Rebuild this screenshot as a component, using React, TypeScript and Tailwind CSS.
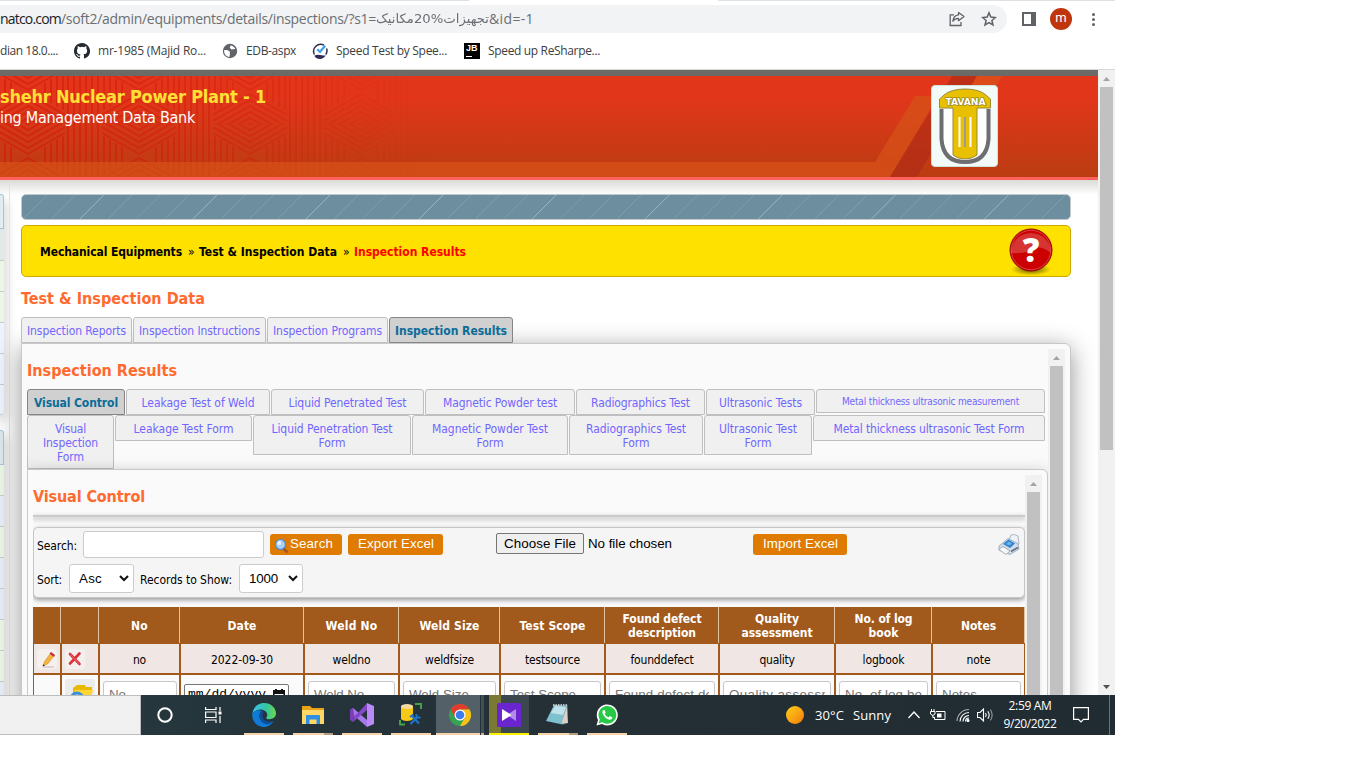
import React, { useLayoutEffect, useRef, useState } from "react";

const ui = "font-['DejaVu_Sans_Condensed','DejaVu_Sans',sans-serif] [font-stretch:condensed]";
const segoe = "font-['Open_Sans','Noto_Sans',sans-serif] [font-stretch:normal]";
const arial = "font-['Liberation_Sans',sans-serif] [font-stretch:normal]";

/* One line of text tracked so that it fills the width `w`. */
function Fit({ w, children, className = "", scale = false }: { w: number; children: string; className?: string; scale?: boolean }) {
  const ref = useRef<HTMLSpanElement>(null);
  const [v, setV] = useState<number | null>(null);
  useLayoutEffect(() => {
    if (ref.current && v === null) {
      const n = ref.current.getBoundingClientRect().width;
      setV(scale ? w / n : (w - n) / children.length);
    }
  }, [v, w, scale, children]);
  const style = v === null ? {} : scale ? { transform: `scaleX(${v})` } : { letterSpacing: `${v}px` };
  return (
    <span className={`block shrink-0 whitespace-pre ${className}`} style={{ width: w }}>
      <span ref={ref} className="inline-block origin-left" style={style}>{children}</span>
    </span>
  );
}

function Arrow({ down = false }: { down?: boolean }) {
  return (
    <svg width="17" height="17" viewBox="0 0 17 17" className="block shrink-0">
      <path d={down ? "M5 7h7l-3.5 4z" : "M5 11h7l-3.5-4z"} fill={down ? "#505050" : "#a3a3a3"} />
    </svg>
  );
}

function ScrollBar({ thumb }: { thumb: string }) {
  return (
    <div className="flex w-[17px] shrink-0 flex-col items-center self-stretch bg-[#f1f1f1]">
      <Arrow />
      <div className={`w-[13px] bg-[#c1c1c1] ${thumb}`} />
    </div>
  );
}

function Toolbar() {
  return (
    <div className={`flex h-[33px] flex-col bg-white ${segoe}`}>
      <div className="flex h-px justify-between">
        <div className="w-[469px] bg-[#dee1e6]" />
        <div className="w-[397px] bg-[#dee1e6]" />
      </div>
      <div className="mt-1 flex h-7 items-center">
        <div className="flex h-7 w-[1007px] items-center rounded-r-full bg-[#f1f3f4] text-[14px] leading-5 text-[#6b6f73]">
          <Fit w={61} className="text-[#202124]">natco.com</Fit>
          <Fit w={315}>/soft2/admin/equipments/details/inspections/?s1=</Fit>
          <Fit w={113} scale className="font-['DejaVu_Sans',sans-serif] text-[13px]">تجهیزات%20مکانیک</Fit>
          <Fit w={45}>&id=-1</Fit>
          <svg className="ml-[415px]" width="16" height="16" viewBox="0 0 16 16" fill="none" stroke="#5f6368" strokeWidth="1.3">
            <path d="M5 3.8H1.2V14.5H12V11" />
            <path d="M9.5 1.5L15 5.5L9.5 9.7V7.3C6.8 7.3 5 8.3 3.8 10.2C4.2 6.5 6 4.2 9.5 3.8Z" strokeLinejoin="round" />
          </svg>
          <svg className="ml-4" width="16" height="16" viewBox="0 0 16 16" fill="none" stroke="#5f6368" strokeWidth="1.5">
            <path d="M8 1.8L9.8 6.1L14.4 6.5L10.9 9.5L12 14L8 11.6L4 14L5.1 9.5L1.6 6.5L6.2 6.1Z" />
          </svg>
        </div>
        <div className="ml-[15px] h-[14px] w-[14px] border-2 border-r-[5px] border-[#5f6368]" />
        <div className="ml-[14px] flex h-[22px] w-[22px] items-center justify-center rounded-full bg-[#bf360c] pb-0.5 font-['Roboto',sans-serif] text-[13px] text-white">m</div>
        <div className="ml-5 flex flex-col gap-[2px]">
          <i className="h-[3px] w-[3px] rounded-full bg-[#5f6368]" />
          <i className="h-[3px] w-[3px] rounded-full bg-[#5f6368]" />
          <i className="h-[3px] w-[3px] rounded-full bg-[#5f6368]" />
        </div>
      </div>
    </div>
  );
}

function Bookmarks() {
  return (
    <div className={`flex h-[37px] items-center border-b border-[#d8d8d8] bg-white text-[12px] leading-4 text-[#3c4043] ${segoe}`}>
      <Fit w={58}>dian 18.0....</Fit>
      <svg className="ml-4 shrink-0" width="16" height="16" viewBox="0 0 16 16" fill="#24292f">
        <path d="M8 0C3.58 0 0 3.58 0 8c0 3.54 2.29 6.53 5.47 7.59.4.07.55-.17.55-.38v-1.49c-2.01.37-2.53-.49-2.69-.94-.09-.23-.48-.94-.82-1.13-.28-.15-.68-.52-.01-.53.63-.01 1.08.58 1.23.82.72 1.21 1.87.87 2.33.66.07-.52.28-.87.51-1.07-1.78-.2-3.64-.89-3.64-3.95 0-.87.31-1.59.82-2.15-.08-.2-.36-1.02.08-2.12 0 0 .67-.21 2.2.82a7.6 7.6 0 0 1 4 0c1.53-1.04 2.2-.82 2.2-.82.44 1.1.16 1.92.08 2.12.51.56.82 1.27.82 2.15 0 3.07-1.87 3.75-3.65 3.95.29.25.54.73.54 1.48v2.2c0 .21.15.46.55.38A8 8 0 0 0 8 0Z" />
      </svg>
      <Fit w={108} className="ml-2">mr-1985 (Majid Ro...</Fit>
      <svg className="ml-4 shrink-0" width="16" height="16" viewBox="0 0 16 16">
        <circle cx="8" cy="8" r="7.2" fill="#5f6368" />
        <path d="M2 7.4C3.5 6.6 6 7.2 7.4 8.2C8.6 9.2 7.4 10 7.9 11.2L7.4 13.900C4.200 13.600 2 11 2 7.400ZM8.500 2.400C7.600 3.200 8.800 4 7.700 4.800L9.500 6.400L13.300 6C12.700 4 10.700 2.600 8.500 2.400Z" fill="#fff" />
      </svg>
      <Fit w={50} className="ml-2">EDB-aspx</Fit>
      <svg className="ml-4 shrink-0" width="16" height="16" viewBox="0 0 16 16" fill="none">
        <path d="M2.400 11.500A7 7 0 0 1 12 2.200M14.600 5.500A7 7 0 0 1 13.800 11.500" stroke="#2b2d52" strokeWidth="1.500" />
        <path d="M2.300 12.800Q5 11.300 8 12Q11 12.700 13.700 12.200Q11.500 16 8 16Q4.300 16 2.300 12.800" fill="#2b2d52" />
        <path d="M5.200 6.200L8 8.800L13.200 2.800" stroke="#3ea1f2" strokeWidth="2.200" />
      </svg>
      <Fit w={111} className="ml-2">Speed Test by Spee...</Fit>
      <div className={`ml-[17px] flex h-4 w-4 shrink-0 flex-col bg-black pl-[2px] pt-[1px] text-[9px] font-bold leading-[9px] text-white ${arial}`}>
        <span>JB</span>
        <i className="mt-[3px] h-px w-[6px] bg-white" />
      </div>
      <Fit w={112} className="ml-2">Speed up ReSharpe...</Fit>
    </div>
  );
}

function HeaderArt() {
  const offsets = [-24, -18, -12, -6, 0, 6, 12, 18, 24, 30, 36, 42, 48, 54, 60];
  return (
    <svg width="1098" height="101" viewBox="0 0 1098 101" className="col-start-1 row-start-1 block">
      <defs>
        <linearGradient id="hd" x1="0" y1="0" x2="0" y2="1">
          <stop offset="0.2" stopColor="#e2361b" />
          <stop offset="0.85" stopColor="#c23b13" />
          <stop offset="1" stopColor="#bb3c11" />
        </linearGradient>
        <linearGradient id="fade" x1="0" x2="1" y1="0" y2="0">
          <stop offset="0" stopColor="#fff" />
          <stop offset="0.5" stopColor="#fff" stopOpacity="0.7" />
          <stop offset="1" stopColor="#fff" stopOpacity="0" />
        </linearGradient>
        <mask id="mk">
          <rect width="430" height="86" fill="url(#fade)" />
          <rect y="86" width="430" height="15" fill="url(#fade)" opacity="0.25" />
        </mask>
        <clipPath id="roof"><path d="M37 0L74 21V32H0V21Z" /></clipPath>
        <clipPath id="vee"><path d="M37 64L74 43V32H0V43Z" /></clipPath>
        <pattern id="hatch" width="111" height="64" patternUnits="userSpaceOnUse" x="-9" y="15">
          <g stroke="#d80d04" strokeWidth="2" fill="none">
            <g clipPath="url(#roof)">{offsets.map((y) => <path key={y} d={`M0 ${y + 24}L37 ${y + 3}L74 ${y + 24}`} />)}</g>
            <g clipPath="url(#vee)">{offsets.map((y) => <path key={y} d={`M0 ${y}L37 ${y + 21}L74 ${y}`} />)}</g>
            {[77, 83, 89, 95, 101, 107].map((x) => <path key={x} d={`M${x} 0V64`} />)}
            {[2, 8, 14, 20].map((d) => (
              <path key={d} d={`M${d} 0V${20 - d * 0.57}M${74 - d} 0V${20 - d * 0.57}M${d} 64V${44 + d * 0.57}M${74 - d} 64V${44 + d * 0.57}`} />
            ))}
          </g>
        </pattern>
      </defs>
      <rect width="1098" height="101" fill="url(#hd)" />
      <path d="M0 86H875L915 20H938L890 101H0Z" fill="#d65018" opacity="0.8" />
      <path d="M890 101L952 0H977L917 101Z" fill="#b12e17" opacity="0.75" />
      <path d="M977 0H1002L990 20H965Z" fill="#dc4b19" />
      <rect width="430" height="101" fill="url(#hatch)" mask="url(#mk)" opacity="0.45" />
    </svg>
  );
}

function Logo() {
  return (
    <svg width="67" height="82" viewBox="0 0 67 82" className="block">
      <rect x="0.500" y="0.500" width="66" height="81" rx="3.500" fill="#f2fbf8" stroke="#cfe3dd" />
      <path d="M10.500 24V54Q12 77 34 77Q56 77 57.500 54V24" fill="#fff" stroke="#6e6e72" strokeWidth="4" />
      <path d="M8.500 23V14Q11 12 13 10Q20 4 34 4Q48 4 55 10Q57 12 59.500 14V23H46V70Q41 74 34 74Q27 74 22 70V23Z" fill="#e8c000" stroke="#9a8a3a" strokeWidth="1" />
      <path d="M28.500 32V62M39.500 32V62" stroke="#fff" strokeWidth="2" />
      <path d="M34 32V62" stroke="#9b9b9b" strokeWidth="2" />
      <text x="14.500" y="20.300" fontFamily="DejaVu Sans" fontWeight="bold" fontSize="8.500" textLength="40" lengthAdjust="spacingAndGlyphs" fill="#fff" stroke="#8b7a2a" strokeWidth="1.200" paintOrder="stroke">TAVANA</text>
    </svg>
  );
}

function SideRows() {
  return (
    <div className="flex w-[9px] shrink-0 flex-col pt-[14px]">
      <div className="w-1 rounded-r-[3px] shadow-[0_6px_12px_rgba(0,0,0,0.4)]">
        <div className="h-[35px] rounded-tr-[3px] border border-l-0 border-[#a9c5d3] bg-[#dfecf2]" />
        <div className="h-8 border-b border-[#c3ced3] bg-[#dfe9e6]" />
        <div className="h-[31px] border-b border-[#c3ced3] bg-[#eaf7e4]" />
        <div className="h-[31px] border-b border-[#c3ced3] bg-[#eaf7e4]" />
        <div className="h-[31px] border-b border-[#c3ced3] bg-[#edf3fc]" />
        <div className="h-[31px] border-b border-[#c3ced3] bg-[#edf3fc]" />
        <div className="h-[30px] rounded-br-[3px] border-b border-[#c3ced3] bg-[#edf3fc]" />
      </div>
      <div className="mt-[15px] w-1 rounded-r-[3px] shadow-[0_6px_12px_rgba(0,0,0,0.4)]">
        <div className="h-[35px] rounded-tr-[3px] border border-l-0 border-[#a9c5d3] bg-[#dbe9ef]" />
        <div className="h-[31px] border-b border-[#c3ced3] bg-[#eaf7e4]" />
        <div className="h-[31px] border-b border-[#c3ced3] bg-[#e6eef7]" />
        <div className="h-[31px] border-b border-[#c3ced3] bg-[#eaf7e4]" />
        <div className="h-[31px] border-b border-[#c3ced3] bg-[#e6eef7]" />
        <div className="h-[31px] border-b border-[#c3ced3] bg-[#e6eef7]" />
        <div className="h-[31px] border-b border-[#c3ced3] bg-[#eaf7e4]" />
        <div className="h-[31px] border-b border-[#c3ced3] bg-[#eaf7e4]" />
        <div className="h-[31px] border-b border-[#c3ced3] bg-[#e6eef7]" />
      </div>
    </div>
  );
}

function HelpIcon() {
  return (
    <svg width="46" height="50" viewBox="0 0 46 50" className={`block ${segoe}`}>
      <defs>
        <radialGradient id="sh"><stop offset="0.3" stopColor="#6d5c00" stopOpacity="0.75" /><stop offset="1" stopColor="#6d5c00" stopOpacity="0" /></radialGradient>
      </defs>
      <ellipse cx="23" cy="42.500" rx="20" ry="6" fill="url(#sh)" />
      <circle cx="23" cy="23" r="21" fill="#cc0000" stroke="#8f1010" />
      <path d="M3 26Q20 27 28 21Q33 19 43 26A20 20 0 1 0 3 26Z" fill="#fff" opacity="0.200" />
      <circle cx="23" cy="23" r="19.700" fill="none" stroke="#ee6060" opacity="0.600" />
      <text x="23" y="35" textAnchor="middle" fontFamily="Open Sans" fontWeight="800" fontSize="33" fill="#fff">?</text>
    </svg>
  );
}

function Tab({ box, lines, active = false, small = false }: { box: string; lines: [string, number][]; active?: boolean; small?: boolean }) {
  return (
    <div className={`flex shrink-0 flex-col items-center rounded-t-[3px] border ${box} ${active ? "border-[#858585] bg-[#d0d0d0] font-bold text-[#0b6c99]" : "border-[#bfbfbf] bg-[#f0f0f0] text-[#7066ff]"} ${small ? "pt-[5px] text-[10px] leading-[13px]" : "pt-[6px] text-[12px] leading-[14px]"}`}>
      {lines.map(([t, w]) => <Fit key={t} w={w}>{t}</Fit>)}
    </div>
  );
}

function Chevron() {
  return <svg width="10" height="7" viewBox="0 0 10 7" fill="none" stroke="#111" strokeWidth="2"><path d="M1 1L5 5L9 1" /></svg>;
}

function SearchBox() {
  return (
    <div className="h-[71px] rounded-[5px] border border-[#c6c6c6] bg-[#f5f5f5] pl-[3px] text-[12px] leading-4 text-black shadow-[0_2px_5px_rgba(0,0,0,0.4)]">
      <div className="flex h-[33px] items-start pt-[3px]">
        <Fit w={40} className="mt-[7px]">Search:</Fit>
        <div className="ml-[6px] h-[27px] w-[181px] rounded-[3px] border border-[#ccc] bg-white" />
        <div className={`ml-[6px] mt-[3px] flex h-[21px] w-[72px] rounded-[3px] bg-[#de7b00] pl-1 text-[13.33px] leading-[19px] text-white ${arial}`}>
          <svg width="16" height="16" viewBox="0 0 16 16" className="mt-1">
            <path d="M9 10L13.500 14.500" stroke="#a3581c" strokeWidth="2.500" />
            <circle cx="6.500" cy="6.500" r="5" fill="#a9d0f8" stroke="#4d88cc" strokeWidth="1.200" />
            <circle cx="5.200" cy="5" r="2" fill="#e8f4ff" />
          </svg>
          <Fit w={43}>Search</Fit>
        </div>
        <div className={`ml-[6px] mt-[3px] h-[21px] w-[95px] rounded-[3px] bg-[#de7b00] pl-[10px] text-[13.33px] leading-[19px] text-white ${arial}`}><Fit w={76}>Export Excel</Fit></div>
        <div className={`ml-[53px] mt-[2px] h-[21px] w-[88px] rounded-[2px] border border-[#767676] bg-[#efefef] pl-[7px] text-[13.33px] leading-[19px] ${arial}`}><Fit w={72}>Choose File</Fit></div>
        <Fit w={84} className={`ml-1 mt-[5px] text-[13.33px] ${arial}`}>No file chosen</Fit>
        <div className={`ml-[81px] mt-[3px] h-[21px] w-[94px] rounded-[3px] bg-[#de7b00] pl-[10px] text-[13.33px] leading-[19px] text-white ${arial}`}><Fit w={75}>Import Excel</Fit></div>
        <svg width="22" height="22" viewBox="0 0 22 22" className="ml-[151px] mt-[3px]">
          <path d="M11 6L13 1Q16 -0.500 20 2L21 10L18 13Z" fill="#eef2f6" stroke="#aab6c2" />
          <path d="M1 12L10 4.500L20 9.500L21 15L12 20.500L1 16Z" fill="#d3dde9" stroke="#93a1b3" strokeWidth="0.800" />
          <path d="M5 10L10.500 5.500L17 9.500L12 14Z" fill="#2f83cf" />
          <path d="M8 10L11 7.500L14 9.500L11.500 11.500Z" fill="#6fb4ea" />
          <path d="M0.800 15.500L5 12.500L12 17L8 20.500Z" fill="#f7fafc" stroke="#8f9cad" strokeWidth="0.800" />
          <path d="M13 17.500L20 13.500" stroke="#5b6a80" strokeWidth="1.500" />
        </svg>
      </div>
      <div className="flex items-start pt-[3px]">
        <Fit w={25} className="mt-[8px]">Sort:</Fit>
        <div className={`ml-[7px] flex h-[29px] w-[65px] items-center justify-between rounded-[3px] border border-[#ccc] bg-white pl-[9px] pr-1 text-[13.33px] ${arial}`}><Fit w={23}>Asc</Fit><Chevron /></div>
        <Fit w={92} className="ml-[6px] mt-[8px]">Records to Show:</Fit>
        <div className={`ml-[7px] flex h-[29px] w-[64px] items-center justify-between rounded-[3px] border border-[#ccc] bg-white pl-[9px] pr-1 text-[13.33px] ${arial}`}><Fit w={29}>1000</Fit><Chevron /></div>
      </div>
    </div>
  );
}

const cols = "grid w-[992px] grid-cols-[28px_38px_81px_124px_95px_101px_105px_114px_116px_97px_93px]";

const heads: [string, number][][] = [
  [], [], [["No", 17]], [["Date", 29]], [["Weld No", 52]], [["Weld Size", 60]], [["Test Scope", 66]],
  [["Found defect", 79], ["description", 68]], [["Quality", 44], ["assessment", 71]], [["No. of log", 58], ["book", 30]], [["Notes", 35]],
];
const values: [string, number][] = [["no", 13], ["2022-09-30", 62], ["weldno", 38], ["weldfsize", 49], ["testsource", 55], ["founddefect", 63], ["quality", 35], ["logbook", 42], ["note", 24]];
const holders: [string, number][] = [["Weld No", 50], ["Weld Size", 60], ["Test Scope", 66], ["Found defect de", 98], ["Quality assessm", 104], ["No. of log bo", 77], ["Notes", 35]];

function DataTable() {
  const cell = "flex items-center justify-center border-x border-[#a1591c]";
  const input = "h-[27px] min-w-0 flex-1 rounded-[3px] border border-[#c8c8c8] bg-white px-[5px]";
  return (
    <div className="mt-[9px] text-[12px]">
      <div className={`${cols} h-[37px] bg-[#a1591c] font-bold leading-[14px] text-white`}>
        {heads.map((h, i) => (
          <div key={i} className="flex h-9 flex-col items-center justify-center border-r border-[#e2c39f] pl-px pt-px">
            {h.map(([t, w]) => <Fit key={t} w={w}>{t}</Fit>)}
          </div>
        ))}
      </div>
      <div className={`${cols} h-[31px] border-b-2 border-[#a1591c] bg-[#f0e6e4] text-black`}>
        <div className={cell}>
          <svg width="20" height="20" viewBox="0 0 20 20" className="rounded-[3px] bg-[#f5efee]">
            <path d="M6 18H17" stroke="#cfcaca" strokeWidth="1.500" />
            <path d="M6 17L7.500 12.500L13 5L16.500 7.500L10.500 15Z" fill="#f3b33c" stroke="#c98518" strokeWidth="0.500" />
            <path d="M12.500 4.500L17 8L18 6L14 3Z" fill="#c22b35" />
            <path d="M5.500 17.500L6.300 15.300L8 16.500Z" fill="#333" />
          </svg>
        </div>
        <div className={`${cell} !justify-start pl-[3px]`}>
          <svg width="20" height="20" viewBox="0 0 20 20" className="rounded-[3px] bg-[#f3efee]">
            <path d="M5 5L14.500 15M14.500 4.500L5 14.500" stroke="#df3038" strokeWidth="2.600" strokeLinecap="round" />
            <path d="M5 5L14 14.500" stroke="#f06a6a" strokeWidth="1" />
          </svg>
        </div>
        {values.map(([t, w]) => <div key={t} className={`${cell} pt-0.5`}><Fit w={w}>{t}</Fit></div>)}
      </div>
      <div className={`${cols} h-[46px] bg-[#fafafa] text-[13.33px] leading-[25px] text-[#757575] ${arial} [&>div]:items-start [&>div]:border-x [&>div]:border-[#a1591c]`}>
        <div className="flex" />
        <div className="flex pl-[3px] pt-1">
          <svg width="30" height="30" viewBox="0 0 30 30" className="rounded-[3px] bg-[#ececec]">
            <path d="M8 9L12 6H20L21 8H27V22H8Z" fill="#e9b800" />
            <path d="M10 11H28L25 24H7Z" fill="#ffd633" />
            <circle cx="12" cy="20" r="7.500" fill="#3d8fd8" />
            <circle cx="12" cy="20" r="4.500" fill="#cfe9f7" />
          </svg>
        </div>
        <div className="flex pl-[3px] pr-[2px] pt-[6px]"><div className={input}><Fit w={17}>No</Fit></div></div>
        <div className="flex pl-[3px] pt-[9px]">
          <div className="flex h-[22px] w-[105px] items-center rounded-[2px] border border-[#767676] bg-white pl-[3px] text-black">
            <Fit w={78} className="font-['Liberation_Mono',monospace] text-[13px] leading-[18px]">mm/dd/yyyy</Fit>
            <svg width="12" height="13" viewBox="0 0 12 13" className="ml-[7px]"><path d="M0 1H2V0H4V1H8V0H10V1H12V13H0ZM1.500 5V11.500H10.500V5Z" fill="#111" fillRule="evenodd" /></svg>
          </div>
        </div>
        {holders.map(([t, w]) => (
          <div key={t} className="flex min-w-0 px-[3px] pt-[6px]">
            <div className={input}><div className="overflow-hidden"><Fit w={w}>{t}</Fit></div></div>
          </div>
        ))}
      </div>
    </div>
  );
}

function Main() {
  return (
    <div className="ml-[11px] w-[1050px] shrink-0 pt-[14px]">
      <div className="h-[26px] overflow-hidden rounded-[5px] border border-[#c3c9cb] bg-[#6c8e9f]">
        <svg width="1048" height="24" className="block">
          {Array.from({ length: 40 }, (_, i) => (
            <path key={i} d={`M${i * 28.27 - 27} 24L${i * 28.27 - 3} 0`} stroke="#a5c0cd" strokeWidth="1" opacity={i % 4 === 3 ? 0.8 : 0.35} />
          ))}
        </svg>
      </div>
      <div className="mt-[5px] flex h-[52px] items-center rounded-[5px] border border-[#cfa800] bg-[#ffe100] pl-[18px] text-[12px] font-bold text-black">
        <Fit w={142} className="pt-px">Mechanical Equipments</Fit>
        <Fit w={7} className="ml-[6px] pt-px font-normal">»</Fit>
        <Fit w={138} className="ml-1 pt-px">Test & Inspection Data</Fit>
        <Fit w={7} className="ml-[6px] pt-px font-normal">»</Fit>
        <Fit w={112} className="ml-1 pt-px text-[#ff0000]">Inspection Results</Fit>
        <div className="ml-[542px] mt-[2px]"><HelpIcon /></div>
      </div>
      <Fit w={184} className="mt-[10px] h-[30px] text-[16px] font-bold leading-[23px] text-[#ff6a2e]">Test & Inspection Data</Fit>
      <div className="flex gap-px">
        <Tab box="w-[111px] h-[26px]" lines={[["Inspection Reports", 99]]} />
        <Tab box="w-[133px] h-[26px]" lines={[["Inspection Instructions", 121]]} />
        <Tab box="w-[121px] h-[26px]" lines={[["Inspection Programs", 109]]} />
        <Tab active box="w-[124px] h-[26px]" lines={[["Inspection Results", 112]]} />
      </div>
      <div className="flex h-[400px] rounded-tr-[6px] border border-[#c8c8c8] bg-[#fafafa] pl-[5px] pt-[5px] shadow-[0_5px_24px_rgba(0,0,0,0.42)]">
        <div className="w-[1021px] shrink-0">
          <Fit w={150} className="h-[40px] pt-[10px] text-[16px] font-bold leading-6 text-[#ff6a2e]">Inspection Results</Fit>
          <div className="flex h-[26px] gap-px">
            <Tab active box="w-[98px] h-[26px]" lines={[["Visual Control", 84]]} />
            <Tab box="w-[144px] h-[26px]" lines={[["Leakage Test of Weld", 113]]} />
            <Tab box="w-[153px] h-[26px]" lines={[["Liquid Penetrated Test", 118]]} />
            <Tab box="w-[150px] h-[26px]" lines={[["Magnetic Powder test", 114]]} />
            <Tab box="w-[129px] h-[26px]" lines={[["Radiographics Test", 99]]} />
            <Tab box="w-[109px] h-[26px]" lines={[["Ultrasonic Tests", 83]]} />
            <Tab small box="w-[229px] h-[24px]" lines={[["Metal thickness ultrasonic measurement", 177]]} />
          </div>
          <div className="flex h-[54px] items-start gap-px">
            <Tab box="w-[87px] h-[54px]" lines={[["Visual", 31], ["Inspection", 55], ["Form", 27]]} />
            <Tab box="w-[137px] h-[26px]" lines={[["Leakage Test Form", 100]]} />
            <Tab box="w-[158px] h-[40px]" lines={[["Liquid Penetration Test", 121], ["Form", 27]]} />
            <Tab box="w-[156px] h-[40px]" lines={[["Magnetic Powder Test", 116], ["Form", 27]]} />
            <Tab box="w-[134px] h-[40px]" lines={[["Radiographics Test", 100], ["Form", 27]]} />
            <Tab box="w-[108px] h-[40px]" lines={[["Ultrasonic Test", 78], ["Form", 27]]} />
            <Tab box="w-[232px] h-[26px]" lines={[["Metal thickness ultrasonic Test Form", 191]]} />
          </div>
          <div className="[clip-path:inset(-20px_0_0_0)]">
            <div className="flex h-[270px] rounded-tr-[6px] border border-[#c8c8c8] bg-[#fafafa] pl-[5px] pt-[5px] shadow-[0_2px_15px_rgba(0,0,0,0.2)]">
              <div className="w-[992px] shrink-0 overflow-hidden">
                <Fit w={112} className="h-[40px] pt-[10px] text-[16px] font-bold leading-6 text-[#ff6a2e]">Visual Control</Fit>
                <div className="mb-[10px] h-[2px] bg-[#cbcbcb] shadow-[0_2px_5px_1px_rgba(0,0,0,0.200)]" />
                <SearchBox />
                <DataTable />
              </div>
              <ScrollBar thumb="flex-1" />
            </div>
          </div>
        </div>
        <ScrollBar thumb="flex-1" />
      </div>
    </div>
  );
}

const bar = "h-[2px] w-10 bg-[#f6d3a6]";

function Taskbar() {
  return (
    <div className="flex h-10 bg-gradient-to-r from-[#263940] via-[#242f36] to-[#202c32] text-white">
      <div className="h-10 w-[141px] shrink-0 border border-l-0 border-[#bdbdbd] bg-[#f1f1f1]" />
      <div className="flex w-[103px] shrink-0 items-center">
        <svg className="ml-4" width="16" height="16" viewBox="0 0 16 16"><circle cx="8" cy="8" r="6.700" fill="none" stroke="#fff" strokeWidth="2" /></svg>
        <svg className="ml-8" width="17" height="16" viewBox="0 0 17 16" fill="none" stroke="#fff" strokeWidth="1.200"><path d="M0.600 0V2.500H11V0M0.600 16V13H11V16M0.600 5H11V10.500H0.600ZM15 0V4M15 9V16" /><path d="M13.500 4.500H16.500V7.500H13.500Z" fill="#fff" stroke="none" /></svg>
      </div>
      <div className="flex h-10 w-10 shrink-0 flex-col items-center justify-between pt-2">
        <svg width="24" height="24" viewBox="0 0 24 24">
          <defs><linearGradient id="eg" x1="0" x2="1"><stop stopColor="#35c1f1" /><stop offset="0.600" stopColor="#36c6a0" /><stop offset="1" stopColor="#6bd84a" /></linearGradient></defs>
          <path d="M0.300 11C1 4.500 6 0 12 0C19 0 24 5 24 10.500C24 14 21 16.200 17.500 16.200C14.500 16.200 13.800 15.200 14.500 14.200C17 10.500 13 6.500 8.500 6.500C5 6.500 1.500 8.500 0.300 11Z" fill="url(#eg)" />
          <path d="M0.300 11C2 7.500 6.500 6.300 10 8C7 9.500 6.500 14 9 17.500C11.500 21 17 21.500 21.500 18C19.500 21.800 16 24 12 24C5 24-0.500 18 0.300 11Z" fill="#0f7bd4" />
          <path d="M10 8C6 11 7 18 12 20.500C15.500 22.200 19 20.500 21.500 18C17.500 19.800 11.500 18.500 10.500 14C10 12 10.500 10.500 11.500 9Z" fill="#0c4fa0" />
        </svg>
        <div className={bar} />
      </div>
      <div className="ml-[9px] flex h-10 w-10 shrink-0 flex-col items-center justify-between pt-[10px]">
        <svg width="22" height="20" viewBox="0 0 22 20"><path d="M0 1H8L10 3H22V19H0Z" fill="#e8a317" /><path d="M0 5H22V19H0Z" fill="#ffd766" /><path d="M4 19V11Q4 10 5 10H17Q18 10 18 11V19H14.500V14.500H7.500V19Z" fill="#2f8fe0" /></svg>
        <div className={`${bar} flex justify-end`}><i className="h-[2px] w-[9px] bg-[#b59e80]" /></div>
      </div>
      <div className="ml-[9px] flex h-10 w-10 shrink-0 flex-col items-center justify-between pt-2">
        <svg width="24" height="24" viewBox="0 0 24 24">
          <path d="M17 0L24 3V21L17 24Z" fill="#b98af5" />
          <path d="M0 7L3 5L17 17V24L4 12.500L1.500 17.500L0 16.500Z" fill="#a678ea" />
          <path d="M0 7L3 5L4 11.500V12.500L3 19L0 17Z" fill="#7a3fb5" />
          <path d="M3 19L17 7V0L8.500 9.500L4 13Z" fill="#8448c6" />
        </svg>
        <div className={bar} />
      </div>
      <div className="ml-[9px] flex h-10 w-10 shrink-0 flex-col items-center justify-between pt-2">
        <svg width="24" height="24" viewBox="0 0 24 24"><path d="M2 3V16C4 18.500 12 18.500 14 16V3Z" fill="#f6c915" /><ellipse cx="8" cy="3.500" rx="6" ry="2.500" fill="#f3d9a0" /><path d="M16 1H22V6M1 17V21.500H6" fill="none" stroke="#46a04a" strokeWidth="2" /><path d="M11.500 21L18 14.500M13 13L20 20.500" stroke="#1b74cc" strokeWidth="2.200" /><path d="M11 14L14.500 11.500M17.500 11V14.500H21.500" fill="none" stroke="#1b74cc" strokeWidth="2" /></svg>
        <div className={bar} />
      </div>
      <div className="ml-[5px] flex h-10 w-11 shrink-0 flex-col items-center justify-between bg-[#536067] pt-[9px]">
        <svg width="22" height="22" viewBox="0 0 24 24" className="ml-1"><circle cx="12" cy="12" r="12" fill="#34a352" /><path d="M12 12L1.600 6A12 12 0 0 1 22.400 6H12Z" fill="#e33b2e" /><path d="M1.600 6L6.800 15L12 12Z" fill="#e33b2e" /><path d="M12 6H22.400A12 12 0 0 1 12 24L17.200 15Z" fill="#fbc116" /><circle cx="12" cy="12" r="6" fill="#fff" /><circle cx="12" cy="12" r="4.700" fill="#3b7ded" /></svg>
        <div className="h-[2px] w-11 bg-[#f6d3a6]" />
      </div>
      <div className="ml-px flex h-10 w-[3px] shrink-0 items-end bg-[#434f55]"><i className="h-[2px] w-[3px] bg-[#c9ae8b]" /></div>
      <div className="ml-[5px] flex h-10 w-10 shrink-0 flex-col items-center justify-between bg-[linear-gradient(90deg,#7b7a35_12px,#3b484e_12px)] pt-2">
        <svg width="24" height="24" viewBox="0 0 24 24"><rect width="24" height="24" rx="1.500" fill="#6a25cf" /><path d="M19 6V18L10 12Z" fill="#b58be8" /><path d="M5 6V18L14.500 12Z" fill="#fff" /></svg>
        <div className="h-[2px] w-10 bg-[#fff000]" />
      </div>
      <div className="ml-[9px] flex h-10 w-10 shrink-0 flex-col items-center justify-between pt-2">
        <svg width="24" height="24" viewBox="0 0 24 24"><path d="M8 3L22 2L21 20L17 22L1 18Z" fill="#3d6673" /><path d="M8 2L21 3L15 21L0 18Z" fill="#7fc0cf" /><path d="M9 3L20 4L17 12L5 10Z" fill="#bfe2ea" /><path d="M21 3L22 20L15 21Z" fill="#d8d2c4" /><path d="M7 2H21" stroke="#e8e8e8" strokeWidth="1.500" strokeDasharray="1.500 1" /></svg>
        <div className={`${bar} flex justify-end`}><i className="h-[2px] w-[9px] bg-[#b59e80]" /></div>
      </div>
      <div className="ml-[9px] flex h-10 w-10 shrink-0 flex-col items-center justify-between pt-[9px]">
        <svg width="22" height="22" viewBox="0 0 24 24"><path d="M0.500 23.500L2.200 17.500A11.500 11.500 0 1 1 6.500 21.900Z" fill="#fff" /><path d="M2.900 21.100L4.200 17A9.700 9.700 0 1 1 7 19.900Z" fill="#27c845" /><path d="M8.500 6.500C7 7 6.500 9 7.500 11C9 14 11.500 16.500 14.500 17.200C16.500 17.500 17.800 16.300 17.800 14.500L15 13L13.700 14.600C11.800 13.800 10.300 12.500 9.500 10.500L10.500 9.200L9.400 6.500Z" fill="#fff" /></svg>
        <div className={bar} />
      </div>
      <div className={`flex items-center ${segoe}`}>
        <div className="ml-[159px] h-[18px] w-[18px] shrink-0 rounded-full bg-gradient-to-br from-[#ffd018] to-[#ee7b0c]" />
        <Fit w={29} className="ml-[11px] pt-0.5 text-[13px]">30°C</Fit>
        <Fit w={38} className="ml-[9px] pt-0.5 text-[13px]">Sunny</Fit>
        <svg className="ml-[17px] shrink-0" width="12" height="8" viewBox="0 0 12 8" fill="none" stroke="#fff" strokeWidth="1.300"><path d="M0.500 7L6 1L11.500 7" /></svg>
        <svg className="ml-[10px] shrink-0" width="16" height="12" viewBox="0 0 16 12" fill="none" stroke="#fff"><path d="M6 2.500H15V10.500H4.500V8" /><path d="M7 4.500H11.500V8.500H7Z" fill="#fff" stroke="none" /><path d="M0.500 2.500H5V5L2.800 6.500L0.500 5ZM1.500 0V2.500M4 0V2.500M2.800 6V8.500H5" /></svg>
        <svg className="ml-[10px] shrink-0" width="14" height="14" viewBox="0 0 14 14" fill="none" stroke="#fff" strokeWidth="1.100"><path d="M1 13A12 12 0 0 1 13 1.500" opacity="0.600" /><path d="M4 13.500A9 9 0 0 1 13 4.500M7 13.500A6 6 0 0 1 13 7.500M9.500 13.500A3.500 3.500 0 0 1 13 10" /><circle cx="12" cy="12.500" r="1" fill="#fff" /></svg>
        <svg className="ml-[7px] shrink-0" width="17" height="14" viewBox="0 0 17 14" fill="none" stroke="#fff" strokeWidth="1.100"><path d="M0.500 4.500H3L6.500 1V13L3 9.500H0.500Z" /><path d="M8.500 5Q10 7 8.500 9M10.800 3.200Q13.500 7 10.800 10.800" /><path d="M13.300 1.500Q17 7 13.300 12.500" opacity="0.500" /></svg>
        <div className="ml-[9px] flex w-[54px] shrink-0 flex-col items-center text-[12px] leading-[18px]">
          <Fit w={43}>2:59 AM</Fit>
          <Fit w={53}>9/20/2022</Fit>
        </div>
        <svg className="ml-4 shrink-0" width="16" height="16" viewBox="0 0 16 16" fill="none" stroke="#fff" strokeWidth="1.200"><path d="M0.600 0.600H15.400V12.400H10.500L8 15L5.500 12.400H0.600Z" /></svg>
        <div className="ml-5 h-10 w-px shrink-0 bg-[#66737a]" />
      </div>
    </div>
  );
}

export default function App() {
  return (
    <div className={`h-[768px] w-[1366px] overflow-hidden bg-white ${ui}`}>
      <div className="flex h-[735px] w-[1115px] flex-col overflow-hidden">
        <Toolbar />
        <Bookmarks />
        <div className="flex h-[625px] overflow-hidden">
          <div className="w-[1098px] shrink-0 overflow-hidden">
            <div className="h-[6px] bg-[#6b6a66]" />
            <div className="grid h-[101px]">
              <HeaderArt />
              <div className="z-10 col-start-1 row-start-1 flex justify-between pr-[100px] pt-[9px]">
                <div>
                  <Fit w={266} className="text-[18px] font-bold leading-6 text-[#ffe135]">shehr Nuclear Power Plant - 1</Fit>
                  <Fit w={195} className="text-[16px] leading-[18px] text-white">ing Management Data Bank</Fit>
                </div>
                <Logo />
              </div>
            </div>
            <div className="h-[3px] bg-[#ff625c]" />
            <div className="flex h-[515px] bg-[linear-gradient(#dadad7,#ececea_7px,#fff_15px)]">
              <SideRows />
              <div className="w-px shrink-0 bg-[#e4e4e4]" />
              <Main />
            </div>
          </div>
          <div className="flex w-[17px] flex-col items-center bg-[#f1f1f1]">
            <Arrow />
            <div className="h-[363px] w-[13px] bg-[#c1c1c1]" />
            <div className="mt-auto"><Arrow down /></div>
          </div>
        </div>
        <Taskbar />
      </div>
    </div>
  );
}
